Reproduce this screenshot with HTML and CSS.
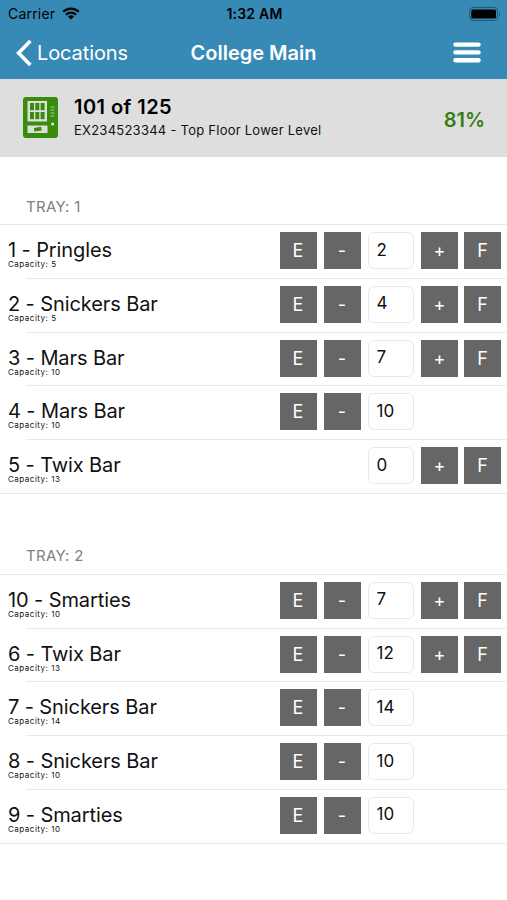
FILE: index.html
```html
<!DOCTYPE html>
<html lang="en">

<head>
    <meta charset="UTF-8" />
    <meta name="viewport" content="width=device-width, initial-scale=1.0" />
    <title>College Main</title>
    <link rel="stylesheet" href="styles.css">
</head>

<body>
    <header>
        <div class="status">
            <div class="carrier">
                <span>Carrier</span>
                <svg width="18" height="13" viewBox="0 0 18 13" fill="none" stroke="#000" stroke-width="2.3">
                    <path d="M1.2 4.8a11 11 0 0 1 15.6 0" />
                    <path d="M4 7.8a7 7 0 0 1 10 0" />
                    <path d="M9 12.6L5.9 9.6a4.4 4.4 0 0 1 6.2 0z" fill="#000" stroke="none" />
                </svg>
            </div>
            <span class="time">1:32 AM</span>
            <svg class="battery" width="32" height="14" viewBox="0 0 32 14">
                <rect x="0.5" y="0.5" width="28" height="13" rx="3.5" fill="none" stroke="#1f5877" />
                <rect x="2.2" y="2.4" width="24.8" height="9.2" rx="1.5" />
                <path d="M30 4.5q2 2.5 0 5z" fill="#1f5877" />
            </svg>
        </div>
        <nav>
            <a class="back" href="#">
                <svg width="17" height="28" viewBox="0 0 17 28" fill="none" stroke="#fff" stroke-width="3.6">
                    <path d="M15.4 2L3.6 14l11.8 12" />
                </svg>
                <span>Locations</span>
            </a>
            <h1>College Main</h1>
            <svg class="menu" width="28" height="21" viewBox="0 0 28 21" fill="#fff">
                <rect x="0.3" y="0.4" width="27.4" height="4.4" rx="2.2" />
                <rect x="0.3" y="8.2" width="27.4" height="4.4" rx="2.2" />
                <rect x="0.3" y="16" width="27.4" height="4.4" rx="2.2" />
            </svg>
        </nav>
    </header>

    <section class="machine">
        <svg width="35" height="41" viewBox="0 0 35 41">
            <rect width="35" height="41" rx="3" fill="#398c0c" />
            <rect x="4.5" y="4" width="19.5" height="20.5" fill="#dedede" />
            <g fill="#398c0c">
                <rect x="7" y="6" width="4" height="7.2" />
                <rect x="12.3" y="6" width="4" height="7.2" />
                <rect x="17.6" y="6" width="4" height="7.2" />
                <rect x="7" y="15" width="4" height="7.2" />
                <rect x="12.3" y="15" width="4" height="7.2" />
                <rect x="17.6" y="15" width="4" height="7.2" />
            </g>
            <rect x="4.5" y="28.5" width="20" height="7.5" fill="#dedede" />
            <path d="M11 31l7-1.2.8 3.8-7.6 1z" fill="#398c0c" />
            <path d="M27.5 10h4M27.5 13h4M27.5 16h4M27.5 19h4" stroke="#a9cc94" stroke-width="1" />
            <circle cx="29.6" cy="27" r="1.6" fill="#dedede" />
        </svg>
        <div class="info">
            <h2>101 of 125</h2>
            <p>EX234523344 - Top Floor Lower Level</p>
        </div>
        <span class="percent">81%</span>
    </section>

    <h3>TRAY: 1</h3>
    <ul>
        <li>
            <div class="product">1 - Pringles<small>Capacity: 5</small></div>
            <button class="empty">E</button>
            <button class="minus">-</button>
            <input type="text" value="2" />
            <button class="plus">+</button>
            <button class="full">F</button>
        </li>
        <li>
            <div class="product">2 - Snickers Bar<small>Capacity: 5</small></div>
            <button class="empty">E</button>
            <button class="minus">-</button>
            <input type="text" value="4" />
            <button class="plus">+</button>
            <button class="full">F</button>
        </li>
        <li>
            <div class="product">3 - Mars Bar<small>Capacity: 10</small></div>
            <button class="empty">E</button>
            <button class="minus">-</button>
            <input type="text" value="7" />
            <button class="plus">+</button>
            <button class="full">F</button>
        </li>
        <li>
            <div class="product">4 - Mars Bar<small>Capacity: 10</small></div>
            <button class="empty">E</button>
            <button class="minus">-</button>
            <input type="text" value="10" />
        </li>
        <li>
            <div class="product">5 - Twix Bar<small>Capacity: 13</small></div>
            <input type="text" value="0" />
            <button class="plus">+</button>
            <button class="full">F</button>
        </li>
    </ul>

    <h3>TRAY: 2</h3>
    <ul>
        <li>
            <div class="product">10 - Smarties<small>Capacity: 10</small></div>
            <button class="empty">E</button>
            <button class="minus">-</button>
            <input type="text" value="7" />
            <button class="plus">+</button>
            <button class="full">F</button>
        </li>
        <li>
            <div class="product">6 - Twix Bar<small>Capacity: 13</small></div>
            <button class="empty">E</button>
            <button class="minus">-</button>
            <input type="text" value="12" />
            <button class="plus">+</button>
            <button class="full">F</button>
        </li>
        <li>
            <div class="product">7 - Snickers Bar<small>Capacity: 14</small></div>
            <button class="empty">E</button>
            <button class="minus">-</button>
            <input type="text" value="14" />
        </li>
        <li>
            <div class="product">8 - Snickers Bar<small>Capacity: 10</small></div>
            <button class="empty">E</button>
            <button class="minus">-</button>
            <input type="text" value="10" />
        </li>
        <li>
            <div class="product">9 - Smarties<small>Capacity: 10</small></div>
            <button class="empty">E</button>
            <button class="minus">-</button>
            <input type="text" value="10" />
        </li>
    </ul>
</body>

</html>
```
FILE: styles.css
```css
* {
    box-sizing: border-box;
}

body {
    font-family: Inter, "Liberation Sans", sans-serif;
    margin: 0;
    background-color: white;
    color: #111;
}

h1,
h2,
h3,
p,
ul {
    margin: 0;
    padding: 0;
    list-style: none;
}

header {
    height: 79px;
    background-color: #378ab5;
}

.status {
    display: grid;
    grid-template-columns: 1fr auto 1fr;
    align-items: center;
    height: 27px;
    padding: 0 6px 0 8px;
    font-size: 14px;
    color: black;
}

.carrier {
    display: flex;
    align-items: center;
    gap: 7px;
    letter-spacing: 0.2px;
}

.time {
    font-weight: 600;
    font-size: 14px;
    letter-spacing: 0.2px;
}

.battery {
    justify-self: end;
}

nav {
    display: grid;
    grid-template-columns: 1fr auto 1fr;
    align-items: center;
    height: 51px;
    padding: 0 15px;
    color: white;
}

.back {
    display: flex;
    align-items: center;
    gap: 5px;
    color: white;
    text-decoration: none;
    font-size: 20px;
    letter-spacing: -0.1px;
}

h1 {
    font-size: 20px;
    font-weight: 600;
}

.menu {
    justify-self: end;
    margin-right: 11px;
}

.machine {
    display: flex;
    align-items: center;
    height: 78px;
    padding: 0 22px 2px 23px;
    background-color: #dedede;
}

.info {
    flex: 1;
    margin-left: 16px;
}

h2 {
    font-size: 20px;
    line-height: 26px;
    font-weight: 600;
    letter-spacing: 0.45px;
    color: black;
}

.info p {
    font-size: 13px;
    line-height: 20px;
    letter-spacing: 0.25px;
}

.percent {
    padding-top: 6px;
    font-size: 20px;
    font-weight: 600;
    color: #357f12;
}

h3 {
    height: 67px;
    padding: 39px 0 0 26px;
    font-size: 15px;
    line-height: 22px;
    font-weight: 400;
    letter-spacing: 0.3px;
    color: #808080;
}

ul {
    border-bottom: 1px solid #e9e9e9;
}

ul + h3 {
    height: 80px;
    padding-top: 51px;
}

li {
    display: grid;
    grid-template-columns: 1fr 44px 44px 53.5px 43px 37px;
    height: 53.75px;
    padding: 8px 6px 0 8px;
    background: linear-gradient(#e9e9e9, #e9e9e9) 0 0 / 100% 1px no-repeat;
}

/* separator is inset from the left edge */
li + li {
    background-position: 26px 0;
}

.product {
    font-size: 20px;
    line-height: 24px;
    padding-top: 6px;
    letter-spacing: -0.1px;
}

.product small {
    display: block;
    font-size: 8px;
    line-height: 8px;
    margin-top: -2px;
    letter-spacing: 0.5px;
}

button {
    grid-row: 1;
    width: 37px;
    height: 37px;
    padding: 0;
    border: none;
    background-color: #666;
    color: white;
    font-family: inherit;
    font-size: 18px;
}

.empty {
    grid-column: 2;
}

.minus {
    grid-column: 3;
}

.plus {
    grid-column: 5;
}

.full {
    grid-column: 6;
}

input {
    grid-row: 1;
    grid-column: 4;
    width: 46px;
    height: 37px;
    padding: 0 8px 2px;
    border: 1px solid #e9e9e9;
    border-radius: 6px;
    font-family: inherit;
    font-size: 17px;
    color: #111;
}
```
